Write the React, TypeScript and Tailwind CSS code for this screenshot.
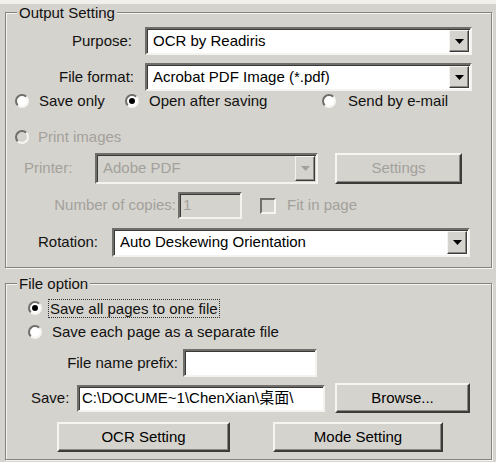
import React from "react";

const font = {fontFamily: '"Liberation Sans", "Noto Sans CJK SC", Arial, sans-serif'};

const Arrow = ({disabled}: { disabled?: boolean }) => (
    <div
        className="w-[20px] h-full flex items-center justify-center bg-[#d5d3cd] border border-t-[#f4f3ef] border-l-[#f4f3ef] border-b-[#3c3b39] border-r-[#3c3b39] shadow-[inset_-1px_-1px_0_#8a8984]">
        <svg width="9" height="5" viewBox="0 0 9 5">
            <path d="M0 0h9L4.5 5z" fill={disabled ? "#a3a19c" : "#000"}/>
        </svg>
    </div>
);

const Combo = ({text, w, disabled}: { text: string, w: string, disabled?: boolean }) => (
    <div
        className={`${w} h-full flex items-stretch border-2 border-t-[#6f6e6a] border-l-[#6f6e6a] border-b-[#f4f3ef] border-r-[#f4f3ef] shadow-[inset_1px_1px_0_#3a3937] p-[1px] ${disabled ? "bg-[#d5d3cd] text-[#a3a19c]" : "bg-white text-black"}`}>
        <div className="flex-1 flex items-center pl-[5px] whitespace-nowrap overflow-hidden">{text}</div>
        <Arrow disabled={disabled}/>
    </div>
);

const Field = ({text, w, disabled}: { text?: string, w: string, disabled?: boolean }) => (
    <div
        className={`${w} h-full flex items-center pl-[3px] whitespace-nowrap overflow-hidden border-2 border-t-[#6f6e6a] border-l-[#6f6e6a] border-b-[#f4f3ef] border-r-[#f4f3ef] shadow-[inset_1px_1px_0_#3a3937] ${disabled ? "bg-[#d5d3cd] text-[#a3a19c]" : "bg-white text-black"}`}>
        {text}
    </div>
);

const Button = ({label, w, disabled}: { label: string, w: string, disabled?: boolean }) => (
    <button
        className={`${w} h-full flex items-center justify-center bg-[#d5d3cd] border-2 border-t-[#f6f5f1] border-l-[#f6f5f1] border-b-[#3c3b39] border-r-[#3c3b39] shadow-[inset_-1px_-1px_0_#8a8984] ${disabled ? "text-[#a3a19c]" : "text-black"}`}>
        {label}
    </button>
);

const Radio = ({checked, disabled}: { checked?: boolean, disabled?: boolean }) => (
    <div
        className={`w-[14px] h-[14px] shrink-0 rounded-full flex items-center justify-center border-2 border-t-[#6f6e6a] border-l-[#6f6e6a] border-b-[#f6f5f1] border-r-[#f6f5f1] ${disabled ? "bg-[#d5d3cd]" : "bg-white"}`}>
        {checked && <div className="w-[6px] h-[6px] rounded-full bg-black"/>}
    </div>
);

const Group = ({title, className, children}: { title: string, className: string, children: React.ReactNode }) => (
    <fieldset
        className={`ml-[5px] w-[487px] border border-[#85837e] shadow-[inset_1px_1px_0_#f6f5f1,1px_1px_0_#f6f5f1] ${className}`}>
        <legend className="ml-[10px] px-[2px] leading-[17px] bg-[#d5d3cd]">{title}</legend>
        {children}
    </fieldset>
);

export default function App() {
    return (
        <div className="w-[496px] h-[462px] overflow-hidden bg-[#d5d3cd] text-[15px] text-[#111] flex flex-col"
             style={font}>
            <div className="h-[4px] bg-[#f1f0ec] shrink-0"/>
            <Group title="Output Setting" className="h-[264px] pl-[1px]">
                <div className="mt-[6px] h-[28px] flex items-center">
                    <div className="w-[125px] text-right">Purpose:</div>
                    <div className="ml-[13px] h-full"><Combo text="OCR by Readiris" w="w-[327px]"/></div>
                </div>
                <div className="mt-[8px] h-[28px] flex items-center">
                    <div className="w-[127px] text-right">File format:</div>
                    <div className="ml-[11px] h-full"><Combo text="Acrobat PDF Image (*.pdf)" w="w-[327px]"/></div>
                </div>
                <div className="mt-[1px] h-[18px] flex items-center pl-[8px]">
                    <div className="w-[110px] flex items-center gap-[10px]"><Radio/>Save only</div>
                    <div className="w-[197px] flex items-center gap-[10px]"><Radio checked/>Open after saving</div>
                    <div className="flex items-center gap-[12px]"><Radio/>Send by e-mail</div>
                </div>
                <div className="mt-[18px] h-[18px] flex items-center pl-[8px] gap-[9px] text-[#a3a19c]">
                    <Radio disabled/>Print images
                </div>
                <div className="mt-[7px] h-[31px] flex items-center pl-[17px] text-[#a3a19c]">
                    <div className="w-[71px]">Printer:</div>
                    <div className="h-full"><Combo text="Adobe PDF" w="w-[223px]" disabled/></div>
                    <div className="ml-[17px] h-full"><Button label="Settings" w="w-[127px]" disabled/></div>
                </div>
                <div className="mt-[8px] h-[27px] flex items-center text-[#a3a19c]">
                    <div className="w-[169px] text-right">Number of copies:</div>
                    <div className="ml-[2px] h-full"><Field text="1" w="w-[64px]" disabled/></div>
                    <div
                        className="ml-[18px] w-[16px] h-[16px] border-2 border-t-[#6f6e6a] border-l-[#6f6e6a] border-b-[#f6f5f1] border-r-[#f6f5f1]"/>
                    <div className="ml-[11px]">Fit in page</div>
                </div>
                <div className="mt-[9px] h-[29px] flex items-center pl-[31px]">
                    <div className="w-[74px]">Rotation:</div>
                    <div className="h-full"><Combo text="Auto Deskewing Orientation" w="w-[358px]"/></div>
                </div>
            </Group>
            <Group title="File option" className="mt-[7px] h-[185px] pl-[1px]">
                <div className="mt-[6px] h-[20px] flex items-center pl-[21px]">
                    <Radio checked/>
                    <div className="ml-[6px] px-[1px] leading-[17px] border border-dotted border-[#333]">Save all pages to one file</div>
                </div>
                <div className="mt-[5px] h-[18px] flex items-center pl-[21px] gap-[10px]">
                    <Radio/>Save each page as a separate file
                </div>
                <div className="mt-[8px] h-[28px] flex items-center">
                    <div className="w-[171px] text-right">File name prefix:</div>
                    <div className="ml-[5px] h-full"><Field w="w-[134px]"/></div>
                </div>
                <div className="mt-[6px] h-[30px] flex items-center pl-[24px]">
                    <div className="w-[46px]">Save:</div>
                    <div className="h-[27px]"><Field text="C:\DOCUME~1\ChenXian\桌面\" w="w-[248px]"/></div>
                    <div className="ml-[10px] h-full"><Button label="Browse..." w="w-[135px]"/></div>
                </div>
                <div className="mt-[9px] h-[30px] flex items-center pl-[50px]">
                    <div className="h-full"><Button label="OCR Setting" w="w-[173px]"/></div>
                    <div className="ml-[43px] h-full"><Button label="Mode Setting" w="w-[170px]"/></div>
                </div>
            </Group>
        </div>
    );
}
